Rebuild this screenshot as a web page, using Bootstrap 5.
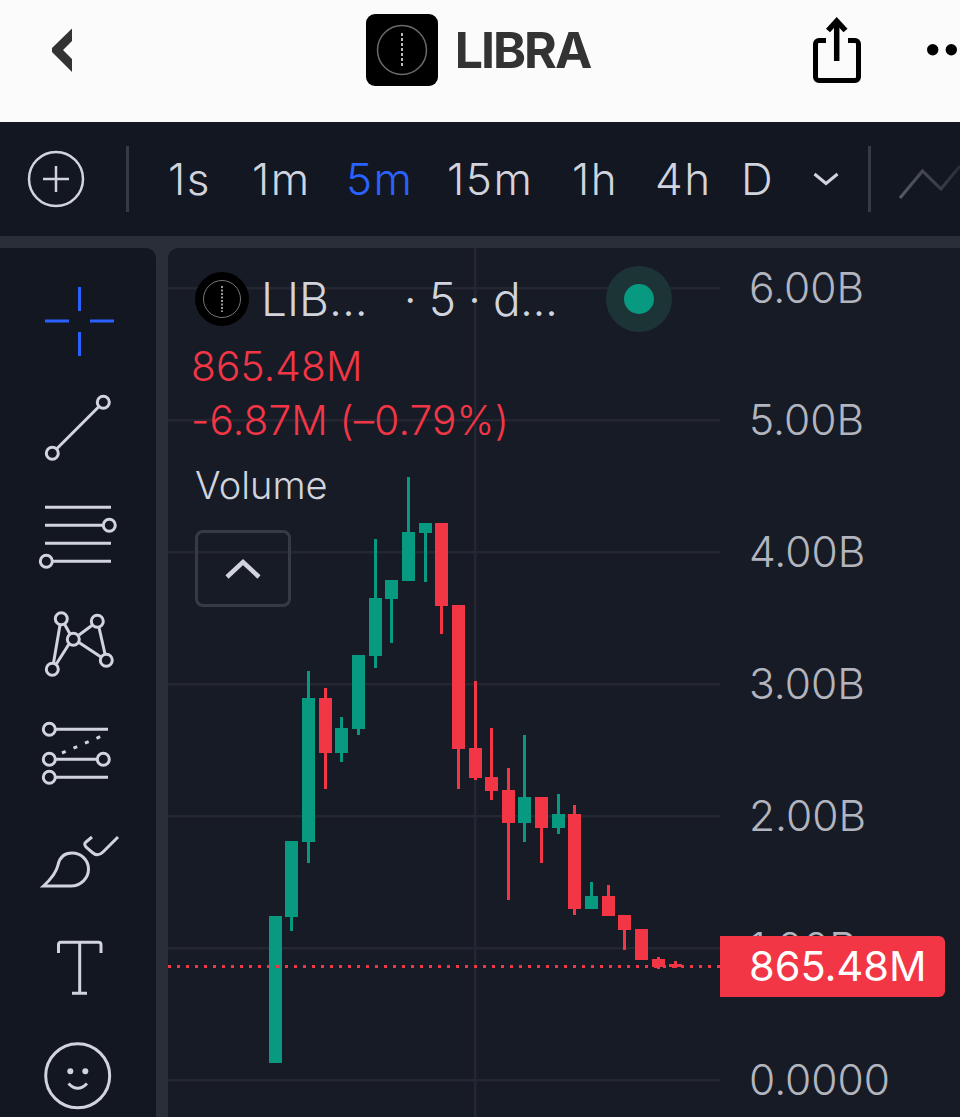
<!DOCTYPE html>
<html lang="en">
<head>
  <meta charset="UTF-8" />
  <meta name="viewport" content="width=device-width, initial-scale=1.0"/>
  <title>LIBRA chart</title>
  <link href="https://cdn.jsdelivr.net/npm/bootstrap@5.3.3/dist/css/bootstrap.min.css" rel="stylesheet">
  <style>
    html, body { height: 1117px; overflow: hidden; }
    body { background: #2a2e39; font-family: Inter, "Liberation Sans", sans-serif; color: #d1d4dc; }
    svg { display: block; }

    .top-bar { height: 122px; padding-bottom: 22px; background: #fbfbfb; }
    .top-icons { position: absolute; left: 0; top: 0; }
    .coin-title { font-size: 50px; font-weight: 700; letter-spacing: -2px; color: #333; line-height: 1; margin-left: 17px; }
    .coin-mark { width: 72px; height: 72px; background: #000; border-radius: 9px; }

    .tool-strip { height: 114px; background: #131722; }
    .strip-sep { width: 3px; height: 66px; background: #363a45; flex: none; }
    .tf-link { font-size: 44px; font-weight: 300; letter-spacing: 1.500px; line-height: 1; color: #d1d4dc; text-decoration: none; }
    .tf-link.on { color: #2962ff; }
    .tf-list { display: grid; grid-template-columns: 84px 94px 101px 125px 83px 86px 72px auto; align-items: center; margin-left: 39px; width: 700px; }

    .work-area { height: 881px; margin-top: 12px; gap: 12px; }
    .draw-tools { width: 156px; flex: none; background: #131722; border-top-right-radius: 10px; padding-top: 19px; }
    .draw-tools svg { flex: none; fill: none; stroke: #d1d4dc; stroke-width: 3; }
    .chart-pane { flex: 1; background: #171b26; border-top-left-radius: 10px; }
    .plot-area { width: 552px; flex: none; }
    .price-axis { padding: 18px 0 0 29px; gap: 88px; font-size: 42.500px; font-weight: 300; color: #b2b5be; }
    .price-axis div { height: 44px; line-height: 44px; }

    .legend-box { left: 27px; top: 18px; }
    .legend-title { font-size: 46px; font-weight: 300; line-height: 54px; }
    .legend-red { color: #f23645; font-size: 40.500px; font-weight: 300; letter-spacing: .2px; line-height: 54px; margin-left: -4px; }
    .legend-name { font-size: 38px; font-weight: 300; line-height: 44px; margin-top: 15px; }
    .status-ring { width: 66px; height: 66px; border-radius: 50%; background: #1d3437; }
    .status-dot { width: 30px; height: 30px; border-radius: 50%; background: #089981; }
    .collapse-btn { width: 96px; height: 77px; margin-top: 23px; border: 3px solid #363a45; border-radius: 8px; background: transparent; }
    .last-tag { left: 552px; top: 688px; width: 225px; height: 61px; padding-left: 29px; line-height: 61px; background: #f23645; color: #fff; border-radius: 0 6px 6px 0; font-size: 41.500px; font-weight: 400; }
  </style>
</head>
<body>

  <header class="top-bar position-relative d-flex align-items-center justify-content-center">
    <svg class="top-icons" width="960" height="122" viewBox="0 0 960 122">
      <polygon points="72,28.5 52,48 52,52 72,72 72,59 63,50 72,41" fill="#333"/>
      <path d="M826 40.500H819a3.500 3.500 0 0 0-3.500 3.500V77a3.500 3.500 0 0 0 3.500 3.500H855a3.500 3.500 0 0 0 3.500-3.500V44a3.500 3.500 0 0 0-3.500-3.500H848" fill="none" stroke="#000" stroke-width="5"/>
      <path d="M836.700 61V22" stroke="#000" stroke-width="5.500"/>
      <path d="M828 30.500L836.700 21L845.500 30.500" fill="none" stroke="#000" stroke-width="5.500"/>
      <circle cx="932.700" cy="49.700" r="5.700" fill="#000"/>
      <circle cx="951.300" cy="49.700" r="5.700" fill="#000"/>
    </svg>
    <div class="d-flex align-items-center position-relative" style="margin-left:-4px">
      <div class="coin-mark d-flex align-items-center justify-content-center">
        <svg width="54" height="54" viewBox="0 0 54 54">
          <circle cx="27" cy="27" r="24.500" fill="none" stroke="#6a6a6a" stroke-width="1.500"/>
          <path d="M27 10V44" stroke="#bbb" stroke-width="2" stroke-dasharray="3 2"/>
        </svg>
      </div>
      <div class="coin-title">LIBRA</div>
    </div>
  </header>

  <nav class="tool-strip d-flex align-items-center">
    <svg class="flex-shrink-0" style="margin-left:26px" width="60" height="60" viewBox="0 0 60 60" fill="none" stroke="#d1d4dc" stroke-width="2.500">
      <circle cx="30" cy="30" r="27"/>
      <path d="M30 17V43M17 30H43"/>
    </svg>
    <div class="strip-sep" style="margin-left:40px"></div>
    <div class="tf-list flex-shrink-0">
      <a class="tf-link" href="#">1s</a>
      <a class="tf-link" href="#">1m</a>
      <a class="tf-link on" href="#">5m</a>
      <a class="tf-link" href="#">15m</a>
      <a class="tf-link" href="#">1h</a>
      <a class="tf-link" href="#">4h</a>
      <a class="tf-link" href="#">D</a>
      <svg class="flex-shrink-0" width="26" height="14" viewBox="0 0 26 14" fill="none" stroke="#d1d4dc" stroke-width="3"><path d="M1.500 2L13 11.500L24.500 2"/></svg>
    </div>
    <div class="strip-sep"></div>
    <svg class="flex-shrink-0" width="89" height="46" viewBox="0 0 89 46" fill="none" stroke-width="3">
      <defs><linearGradient id="fadeLine"><stop offset="0" stop-color="#565963"/><stop offset="1" stop-color="#2a2e39"/></linearGradient></defs>
      <path d="M29 42L51.500 15L70 33L89 10" stroke="url(#fadeLine)"/>
    </svg>
  </nav>

  <main class="work-area d-flex">
    <aside class="draw-tools d-flex flex-column">
      <!-- cross -->
      <svg width="156" height="108" viewBox="0 267 156 108" style="stroke:#2962ff"><path d="M79.500 287V311M79.500 332V356M45 321H69M90 321H114"/></svg>
      <!-- trend line -->
      <svg width="156" height="108" viewBox="0 375 156 108"><circle cx="103.300" cy="402.300" r="6"/><circle cx="52.300" cy="453.300" r="6"/><path d="M99 406.500L56.500 449"/></svg>
      <!-- parallel lines -->
      <svg width="156" height="108" viewBox="0 483 156 108"><path d="M45 507.300H111M45 525.300H103M45 543.300H111M52.500 561.300H111"/><circle cx="109.300" cy="525.300" r="6"/><circle cx="46.300" cy="561.300" r="6"/></svg>
      <!-- pattern -->
      <svg width="156" height="108" viewBox="0 591 156 108"><path d="M60 625L53.500 663M64.500 624L70 634M69 644L56 664.500M79 635L92.500 625M99 627.500L105 654M79 642.500L101 657"/><circle cx="61.300" cy="618.700" r="6"/><circle cx="97.300" cy="621.300" r="6"/><circle cx="73.300" cy="639.300" r="6"/><circle cx="106.300" cy="660.300" r="6"/><circle cx="52.300" cy="669.300" r="6"/></svg>
      <!-- fib levels -->
      <svg width="156" height="108" viewBox="0 699 156 108"><circle cx="49.300" cy="729.300" r="6"/><circle cx="49.300" cy="759.300" r="6"/><circle cx="103.300" cy="759.300" r="6"/><circle cx="49.300" cy="777.300" r="6"/><path d="M56 729.300H108M56 759.300H97M56 777.300H108"/><path d="M62 753L103 735.500" stroke-dasharray="4 8.500"/></svg>
      <!-- brush -->
      <svg width="156" height="108" viewBox="0 807 156 108"><path d="M118 837L103 852Q98 857 93 853L87 848Q83 844 86 842L92 837"/><path d="M43.500 886H71C81 886 88.500 878 88.500 869C88.500 860 81 853 72 853C64 853 59.500 858 58 865C56.500 872 50 880 43.500 886Z"/></svg>
      <!-- text -->
      <svg width="156" height="108" viewBox="0 915 156 108"><path d="M58.500 953V945Q58.500 942.300 61 942.300H98.500Q101 942.300 101 945V953M79.700 942.300V993M72 993.300H87"/></svg>
      <!-- emoji -->
      <svg width="156" height="108" viewBox="0 1023 156 108"><circle cx="77.700" cy="1075.700" r="32"/><path d="M68.500 1083.500Q77.700 1093 87 1083.500"/><circle cx="70.300" cy="1071.300" r="3" fill="#d1d4dc" stroke="none"/><circle cx="85.300" cy="1071.300" r="3" fill="#d1d4dc" stroke="none"/></svg>
    </aside>

    <section class="chart-pane position-relative d-flex overflow-hidden">
      <div class="plot-area">
        <svg id="plot" width="552" height="869" viewBox="168 248 552 869"></svg>
      </div>
      <div class="price-axis d-flex flex-column">
        <div>6.00B</div>
        <div>5.00B</div>
        <div>4.00B</div>
        <div>3.00B</div>
        <div>2.00B</div>
        <div>1.00B</div>
        <div>0.0000</div>
      </div>

      <div class="legend-box position-absolute">
        <div class="d-flex align-items-center">
          <svg width="54" height="54" viewBox="0 0 54 54">
            <circle cx="27" cy="27" r="27" fill="#000"/>
            <circle cx="27" cy="27" r="18.500" fill="none" stroke="#777" stroke-width="1"/>
            <path d="M27 14V40" stroke="#ccc" stroke-width="1.500" stroke-dasharray="2 1.500"/>
          </svg>
          <div class="legend-title" style="margin-left:12px">LIB...</div>
          <div class="legend-title" style="margin-left:36px;letter-spacing:-.5px">· 5 · d...</div>
          <div class="status-ring d-flex align-items-center justify-content-center" style="margin-left:48px">
            <div class="status-dot"></div>
          </div>
        </div>
        <div class="legend-red" style="margin-top:8px">865.48M</div>
        <div class="legend-red">-6.87M (–0.79%)</div>
        <div class="legend-name">Volume</div>
        <button class="collapse-btn d-flex align-items-center justify-content-center p-0" type="button">
          <svg width="36" height="22" viewBox="0 0 36 22" fill="none" stroke="#d1d4dc" stroke-width="4.500"><path d="M2 19L18 4L34 19"/></svg>
        </button>
      </div>

      <div class="last-tag position-absolute">865.48M</div>
    </section>
  </main>

  <script>
    // x, wick top, body top, body bottom, wick bottom, up?
    const candles = [
      [269, 916, 916, 1063, 1063, 1],
      [285, 841, 841, 917, 931, 1],
      [302, 671, 698, 842, 863, 1],
      [319, 688, 698, 753, 789, 0],
      [335, 717, 728, 753, 762, 1],
      [352, 655, 655, 729, 735, 1],
      [369, 539, 598, 656, 668, 1],
      [385, 580, 580, 599, 643, 1],
      [402, 477, 532, 581, 581, 1],
      [419, 523, 523, 533, 582, 1],
      [435, 523, 523, 606, 634, 0],
      [452, 605, 605, 749, 789, 0],
      [469, 681, 748, 778, 780, 0],
      [485, 728, 777, 791, 800, 0],
      [502, 768, 790, 823, 900, 0],
      [518, 735, 797, 823, 842, 1],
      [535, 797, 797, 828, 863, 0],
      [552, 794, 814, 828, 834, 1],
      [568, 805, 814, 909, 915, 0],
      [585, 882, 896, 909, 909, 1],
      [602, 885, 896, 916, 916, 0],
      [618, 915, 915, 930, 950, 0],
      [635, 929, 929, 960, 960, 0],
      [652, 957, 959, 967, 969, 0],
      [669, 961, 964, 967, 968, 0]
    ];

    let svg = '';
    [288, 420, 552, 684, 816, 948, 1080].forEach(y => {
      svg += `<rect x="168" y="${y - 1}" width="552" height="2.500" fill="#242732"/>`;
    });
    svg += '<rect x="474" y="248" width="2.500" height="869" fill="#242732"/>';
    candles.forEach(([x, wt, bt, bb, wb, up]) => {
      const color = up ? '#089981' : '#f23645';
      svg += `<rect x="${x + 5}" y="${wt}" width="3" height="${wb - wt}" fill="${color}"/>`;
      svg += `<rect x="${x}" y="${bt}" width="13" height="${bb - bt}" fill="${color}"/>`;
    });
    svg += '<path d="M168 966.500H720" stroke="#f23645" stroke-width="3" stroke-dasharray="3 6"/>';
    document.getElementById('plot').innerHTML = svg;
  </script>
  <script src="https://cdn.jsdelivr.net/npm/bootstrap@5.3.3/dist/js/bootstrap.bundle.min.js"></script>
</body>
</html>
